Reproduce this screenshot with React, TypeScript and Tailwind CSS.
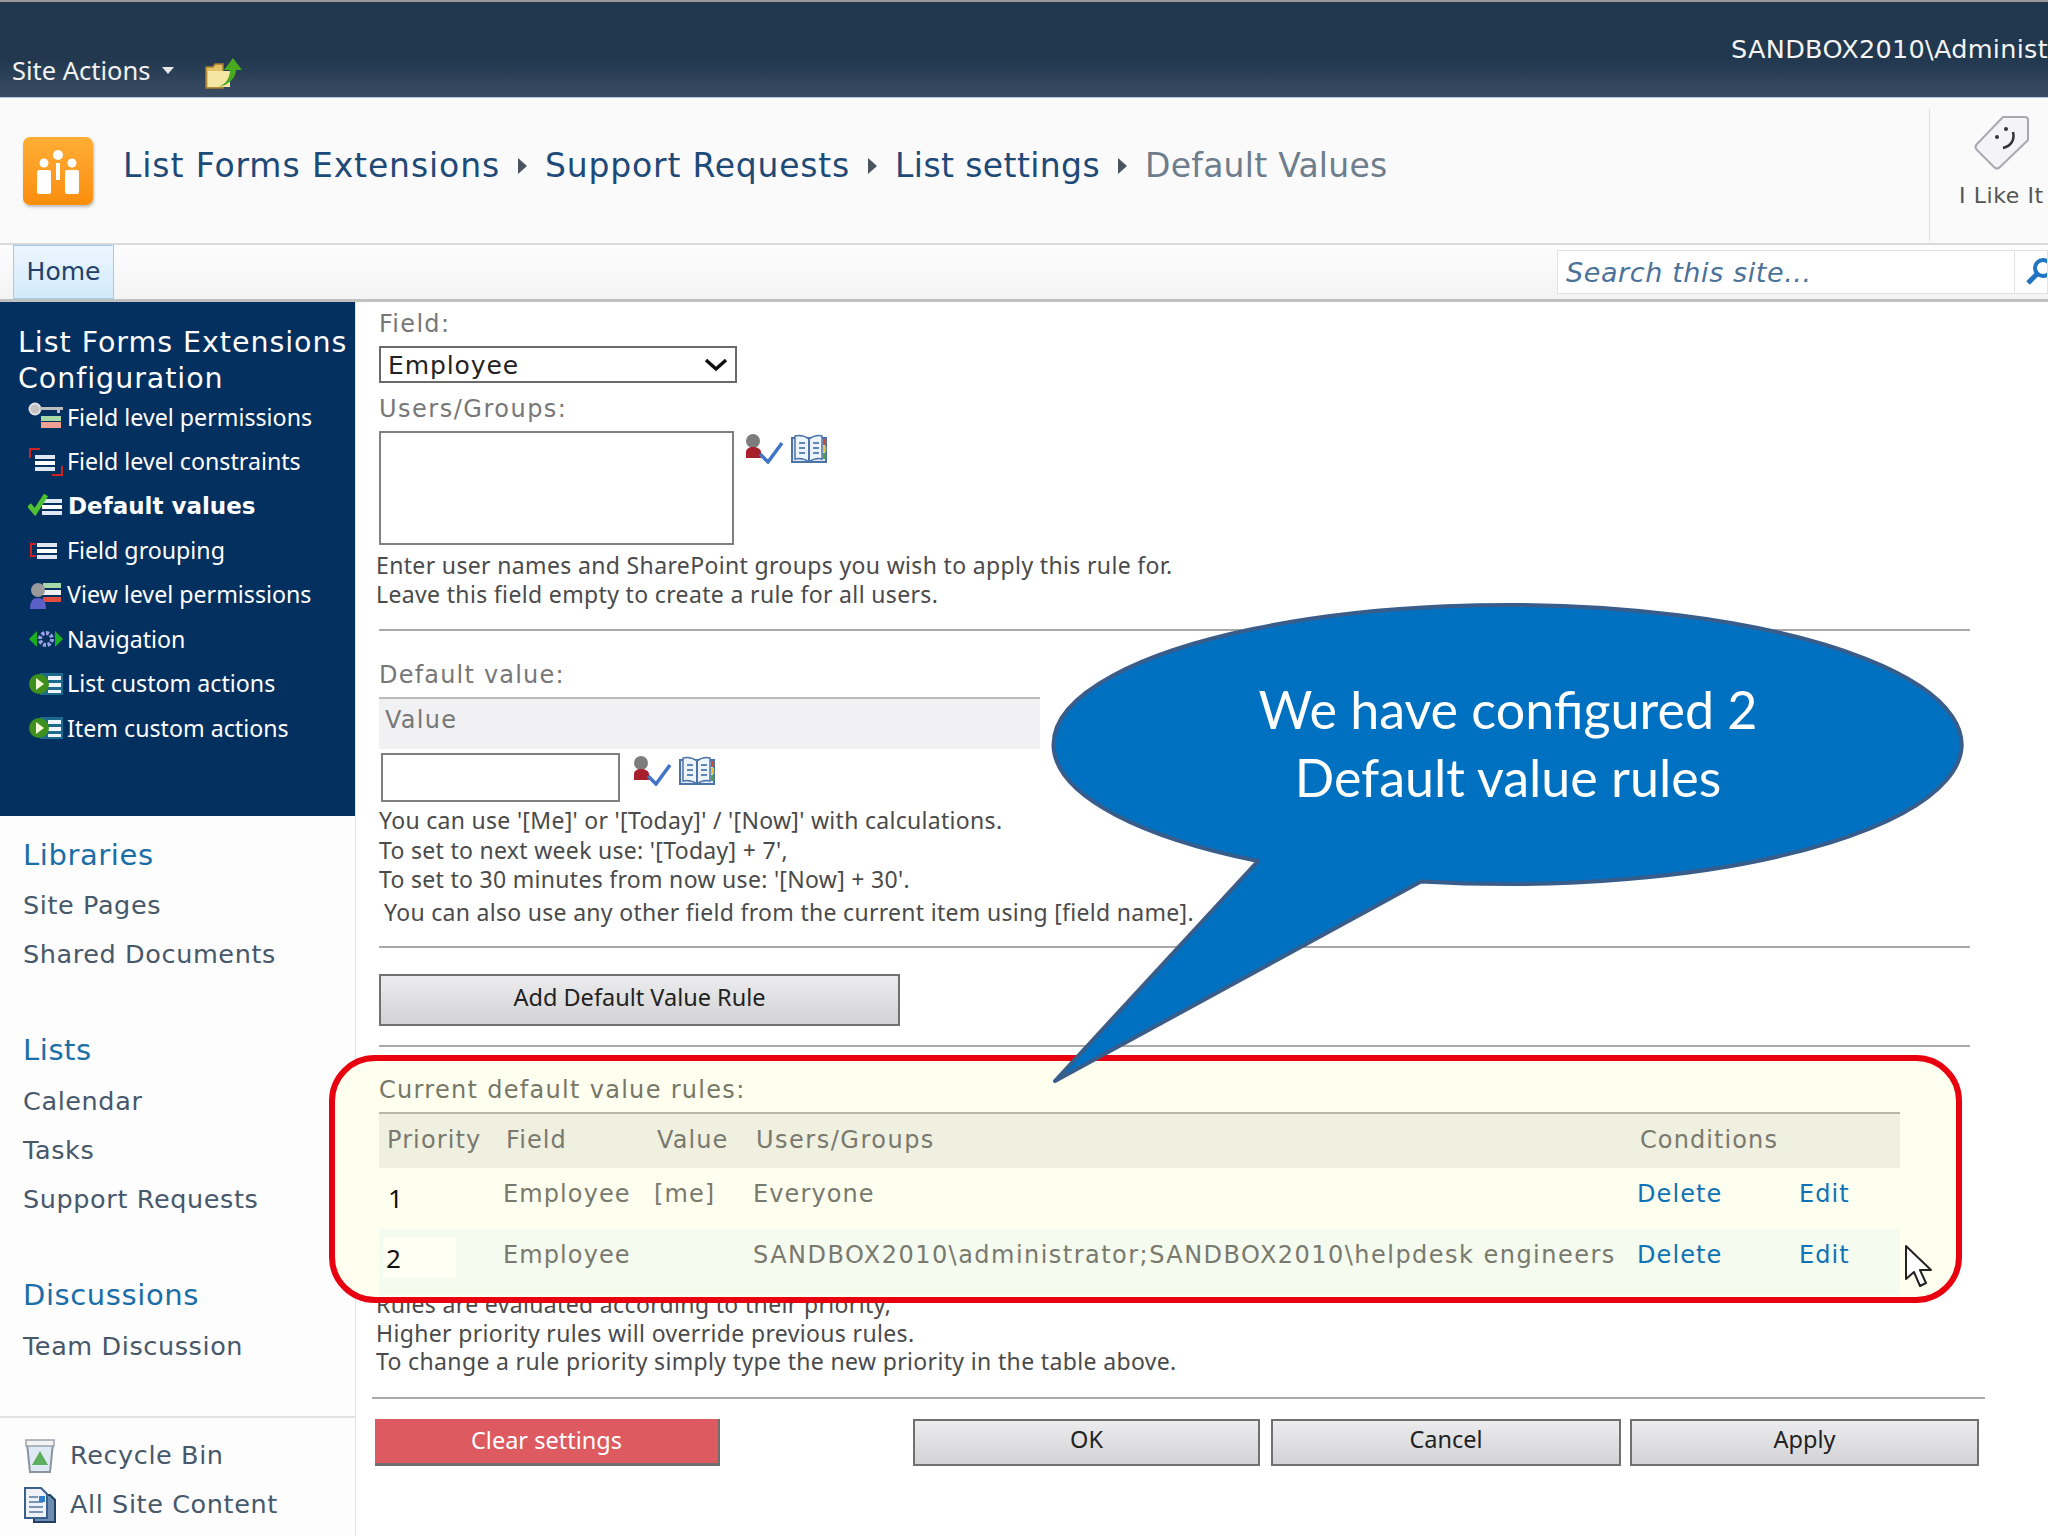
const verdana = "font-['DejaVu_Sans',sans-serif]";
const tahoma = "font-['Noto_Sans',sans-serif]";

const configItems = [
  { label: "Field level permissions", icon: "key" },
  { label: "Field level constraints", icon: "constraints" },
  { label: "Default values", icon: "check", active: true },
  { label: "Field grouping", icon: "group" },
  { label: "View level permissions", icon: "user" },
  { label: "Navigation", icon: "nav" },
  { label: "List custom actions", icon: "action" },
  { label: "Item custom actions", icon: "action" },
];

const quickLaunch = [
  { title: "Libraries", items: ["Site Pages", "Shared Documents"] },
  { title: "Lists", items: ["Calendar", "Tasks", "Support Requests"] },
  { title: "Discussions", items: ["Team Discussion"] },
];

const tableCols = "grid grid-cols-[119px_151px_99px_884px_162px_101px]";

function Bars({ x = 12, colors = ["#dfe8f2", "#ffffff", "#dfe8f2"] }: { x?: number; colors?: string[] }) {
  return (
    <>
      <rect x={x} y="9" width="20" height="4" fill={colors[0]} />
      <rect x={x} y="15" width="20" height="4" fill={colors[1]} />
      <rect x={x} y="21" width="20" height="4" fill={colors[2]} />
    </>
  );
}

function ConfigIcon({ name }: { name: string }) {
  return (
    <svg viewBox="0 0 36 32" className="w-[36px] h-[32px] shrink-0">
      {name === "key" && (
        <>
          <circle cx="7" cy="8" r="5.5" fill="#c4c4c4" stroke="#e2e2e2" strokeWidth="2" />
          <path d="M12 6h23v3h-3v3h-3V9H12z" fill="#bdbdbd" />
          <rect x="13" y="15" width="20" height="5" fill="#a8d8a8" />
          <rect x="13" y="21" width="20" height="6" fill="#f0a090" />
        </>
      )}
      {name === "constraints" && (
        <>
          <path d="M2 12V3h10M34 20v9H24" fill="none" stroke="#d02020" strokeWidth="2" />
          <Bars x={7} />
        </>
      )}
      {name === "check" && (
        <>
          <Bars x={14} />
          <path d="M1 15l6 7L18 5" fill="none" stroke="#4fc030" strokeWidth="5" />
        </>
      )}
      {name === "group" && (
        <>
          <path d="M8 10H3v12h5" fill="none" stroke="#d02020" strokeWidth="2" />
          <Bars x={9} />
        </>
      )}
      {name === "user" && (
        <>
          <rect x="15" y="4" width="18" height="5" fill="#a8d8a8" />
          <rect x="15" y="11" width="18" height="5" fill="#f0f0f0" />
          <rect x="15" y="18" width="18" height="5" fill="#e05040" />
          <circle cx="10" cy="11" r="7" fill="#9a9a9a" />
          <path d="M2 30c0-8 3-11 8-11s8 3 8 11z" fill="#5a60c8" />
        </>
      )}
      {name === "nav" && (
        <>
          <path d="M9 8v16L1 16zM27 8v16l8-8z" fill="#18b020" />
          <circle cx="18" cy="16" r="6" fill="none" stroke="#9aa0e0" strokeWidth="4" strokeDasharray="3 1.6" />
        </>
      )}
      {name === "action" && (
        <>
          <rect x="12" y="5" width="23" height="22" fill="#1d6a8e" />
          <rect x="20" y="8" width="13" height="4" fill="#eef4f8" />
          <rect x="16" y="15" width="17" height="4" fill="#eef4f8" />
          <rect x="20" y="22" width="13" height="3" fill="#eef4f8" />
          <circle cx="11" cy="16" r="10" fill="#3f8f1c" />
          <path d="M8 10l8 6-8 6z" fill="#f2f8d8" />
        </>
      )}
    </svg>
  );
}

function PeoplePicker() {
  return (
    <div className="flex items-start gap-[7px] mt-[3px]">
      <svg viewBox="0 0 40 30" className="w-[40px] h-[30px]">
        <ellipse cx="9" cy="7" rx="7" ry="7" fill="#7d7d7d" />
        <path d="M2 24v-6c0-3 3-5 7-5s8 2 8 5v6z" fill="#a81f2c" />
        <path d="M16 20l8 8L38 9" fill="none" stroke="#3f74c8" strokeWidth="3.5" />
      </svg>
      <svg viewBox="0 0 36 30" className="w-[36px] h-[30px]">
        <path d="M1 4h34v24H1z" fill="#dbe7f5" stroke="#4c74a8" strokeWidth="2" />
        <path d="M4 25V2c5-1 10 0 14 3 4-3 9-4 13-3v23c-4-1-9 0-13 3-4-3-9-4-14-3z" fill="#edf3fa" stroke="#4c74a8" strokeWidth="1.5" />
        <path d="M18 5v22" stroke="#4c74a8" strokeWidth="2" />
        <path d="M8 9h6M8 14h6M8 19h6M22 9h6M22 14h6M22 19h6" stroke="#5f86b8" strokeWidth="2" />
        <rect x="32" y="5" width="3" height="6" fill="#d04a3a" />
        <rect x="32" y="12" width="3" height="6" fill="#e8c030" />
        <rect x="32" y="19" width="3" height="6" fill="#50a040" />
      </svg>
    </div>
  );
}

function Rule({ className = "" }: { className?: string }) {
  return <div className={`h-[2px] bg-[#a9a9a9] ${className}`} />;
}

function GreyButton({ label, className = "" }: { label: string; className?: string }) {
  return (
    <button className={`flex items-center justify-center shrink-0 pb-[4px] border-2 border-[#707070] bg-gradient-to-b from-[#ececee] to-[#d3d3d6] text-[#222] ${tahoma} text-[23.5px] ${className}`}>
      {label}
    </button>
  );
}

export default function App() {
  return (
    <div className="relative w-[2048px] h-[1536px] overflow-hidden bg-white">
      {/* top bar */}
      <div className="relative flex items-end h-[98px] border-t-2 border-[#9a9a9a] border-b border-b-[#b8c6d6] bg-gradient-to-b from-[#21384f] via-[#21384f] via-60% to-[#3a4c64] overflow-hidden">
        <div className={`flex items-center h-[54px] pl-[12px] text-[#f2f2f2] text-[25.5px] ${tahoma}`}>
          <span className="w-[150px]">Site Actions</span>
          <svg viewBox="0 0 12 7" className="w-[12px] h-[7px]"><path d="M0 0h12L6 7z" fill="#e8e8e8" /></svg>
          <svg viewBox="0 0 38 32" className="ml-[31px] mt-[5px] w-[38px] h-[32px]">
            <path d="M1 10h7l2-3h8v24H1z" fill="#e2c068" stroke="#a87c2a" strokeWidth="1.5" />
            <path d="M3 14h22v16H3z" fill="#f6e6a4" />
            <path d="M13 30c8-3 12-9 12-17h-6L28 1l9 12h-6c0 8-7 15-18 17z" fill="#48a81e" />
          </svg>
        </div>
        <div className={`absolute right-0 top-[28px] text-[25.5px] tracking-[0.3px] whitespace-nowrap text-[#f4f4f4] ${verdana}`}>SANDBOX2010\Administ</div>
      </div>

      {/* title row */}
      <div className="flex items-center h-[145px] bg-[#fafafb] overflow-hidden">
        <div className="flex items-center justify-center ml-[23px] w-[70px] h-[68px] rounded-[7px] bg-gradient-to-b from-[#ffae35] to-[#fb8d08] shadow-[1px_2px_3px_#bbb]">
          <svg viewBox="0 0 44 46" className="w-[44px] h-[46px]">
            <circle cx="22" cy="7" r="5" fill="#fff" />
            <circle cx="8" cy="15" r="4.5" fill="#fff" />
            <circle cx="36" cy="15" r="4.5" fill="#fff" />
            <rect x="1" y="22" width="14" height="24" rx="2" fill="#fff" />
            <rect x="29" y="22" width="14" height="24" rx="2" fill="#fff" />
            <path d="M20 15h4v17h-4z" fill="#fff" />
          </svg>
        </div>
        <div className={`flex items-center ml-[30px] mt-[-10px] text-[33px] text-[#1e4a78] whitespace-nowrap ${verdana}`}>
          <span className="tracking-[0.9px]">List Forms Extensions</span>
          <svg viewBox="0 0 9 16" className="mx-[18px] w-[9px] h-[16px]"><path d="M0 0l9 8-9 8z" fill="#4a5560" /></svg>
          <span className="tracking-[0.8px]">Support Requests</span>
          <svg viewBox="0 0 9 16" className="mx-[18px] w-[9px] h-[16px]"><path d="M0 0l9 8-9 8z" fill="#4a5560" /></svg>
          <span className="tracking-[0.4px]">List settings</span>
          <svg viewBox="0 0 9 16" className="mx-[18px] w-[9px] h-[16px]"><path d="M0 0l9 8-9 8z" fill="#4a5560" /></svg>
          <span className="tracking-[0.25px] text-[#6d7d8c]">Default Values</span>
        </div>
        <div className="ml-auto flex flex-col items-start self-end w-[119px] h-[132px] border-l border-[#dedede] pl-[29px] mb-[2px]">
          <svg viewBox="0 0 56 56" className="mt-[5px] ml-[14px] w-[56px] h-[56px]">
            <path d="M30 3h22c2 0 3 1 3 3v20L27 53c-2 2-4 2-6 0L4 36c-2-2-2-4 0-6z" fill="#f4f4f6" stroke="#a8a8b0" strokeWidth="2" />
            <circle cx="24" cy="23" r="2" fill="#333" />
            <circle cx="33" cy="15" r="2" fill="#333" />
            <path d="M40 18c2 8-2 14-10 16" fill="none" stroke="#333" strokeWidth="2.5" />
          </svg>
          <span className={`mt-[9px] whitespace-nowrap text-[22px] tracking-[0.6px] text-[#555] ${verdana}`}>I Like It</span>
        </div>
      </div>

      {/* nav row */}
      <div className="flex items-stretch h-[59px] border-t-2 border-[#d9d9d9] border-b-[3px] border-b-[#c0c0c0] bg-gradient-to-b from-[#fdfdfd] to-[#f3f3f3]">
        <div className={`ml-[13px] w-[101px] flex items-center justify-center border border-[#9fcdec] bg-gradient-to-b from-[#ecf6fe] to-[#d2eafb] text-[25px] text-[#24406a] ${verdana}`}>Home</div>
        <div className="ml-auto flex items-center h-[44px] mt-[5px] w-[491px] border border-[#e2e2e2] bg-white overflow-hidden">
          <input
            readOnly
            placeholder="Search this site..."
            className={`w-[457px] h-full shrink-0 pl-[8px] border-r border-[#e2e2e2] text-[27px] tracking-[0.6px] italic placeholder:text-[#4b7299] ${verdana}`}
          />
          <svg viewBox="0 0 28 28" className="ml-[11px] w-[28px] h-[28px] shrink-0">
            <circle cx="17" cy="10" r="8" fill="none" stroke="#1f74c4" strokeWidth="4" />
            <path d="M11 16L2 25" stroke="#1f74c4" strokeWidth="5" />
          </svg>
        </div>
      </div>

      <div className="flex h-[1236px]">
        {/* sidebar */}
        <div className="flex flex-col w-[356px] shrink-0 border-r border-[#e3e3e3] bg-[#fdfdfd]">
          <div className="h-[514px] bg-[#03305f] pt-[23px] pl-[18px] text-white">
            <div className={`text-[28.5px] leading-[36px] tracking-[0.95px] whitespace-nowrap ${verdana}`}>List Forms Extensions<br />Configuration</div>
            <div className="mt-[-2px] pl-[10px]">
              {configItems.map((item) => (
                <div key={item.label} className={`flex items-center h-[44.4px] gap-[3px] whitespace-nowrap ${item.active ? `font-bold ${verdana} text-[23px]` : `${tahoma} text-[23.2px]`}`}>
                  <ConfigIcon name={item.icon} />
                  <span className={item.active ? "ml-[1px]" : ""}>{item.label}</span>
                </div>
              ))}
            </div>
          </div>
          <div className={`pl-[23px] tracking-[0.6px] ${verdana}`}>
            {quickLaunch.map((group, i) => (
              <div key={group.title} className={i === 0 ? "mt-[20px]" : "mt-[52px]"}>
                <div className="flex items-center h-[40px] text-[29px] text-[#1a6ea8]">{group.title}</div>
                <div className={i === 0 ? "pt-[5px]" : "pt-[6px]"}>
                  {group.items.map((name) => (
                    <div key={name} className="flex items-center h-[49px] text-[25.5px] text-[#47586a]">{name}</div>
                  ))}
                </div>
              </div>
            ))}
          </div>
          <div className={`mt-[45px] border-t-2 border-[#e2e2e2] pt-[13px] pl-[24px] text-[25.5px] tracking-[0.6px] text-[#47586a] ${verdana}`}>
            <div className="flex items-center h-[49px] gap-[14px]">
              <svg viewBox="0 0 32 36" className="w-[32px] h-[36px]">
                <path d="M3 5h26l-3 29H6z" fill="#dfe9f3" stroke="#8a949e" strokeWidth="2" />
                <path d="M2 2h28v6H2z" fill="#f4f4f4" stroke="#9aa3ac" strokeWidth="1.5" />
                <path d="M16 13l8 14H8z" fill="#5cad5c" />
              </svg>
              <span>Recycle Bin</span>
            </div>
            <div className="flex items-center h-[49px] gap-[14px]">
              <svg viewBox="0 0 32 36" className="w-[32px] h-[36px]">
                <path d="M10 8h16l5 5v22H10z" fill="#6c8cb0" stroke="#1f3f66" strokeWidth="2" />
                <path d="M1 1h16l6 6v24H1z" fill="#eef2f8" stroke="#3a5f8a" strokeWidth="2" />
                <path d="M5 10h9M5 15h14M5 20h14M5 25h14" stroke="#7a94b4" strokeWidth="2" />
                <rect x="15" y="9" width="6" height="6" fill="#2f7fd0" />
              </svg>
              <span>All Site Content</span>
            </div>
          </div>
        </div>

        {/* main form */}
        <div className="flex-1 pl-[23px]">
          <div className="w-[1591px]">
            <div className={`mt-[8px] flex items-center h-[28px] text-[24px] tracking-[1.3px] text-[#777] ${verdana}`}>Field:</div>
            <div className={`mt-[8px] flex items-center justify-between w-[358px] h-[37px] border-2 border-[#6a6a6a] pl-[7px] pr-[7px] pt-[2px] text-[25px] tracking-[0.9px] text-[#222] ${verdana}`}>
              <span>Employee</span>
              <svg viewBox="0 0 24 14" className="mb-[2px] w-[24px] h-[14px]"><path d="M2 2l10 9 10-9" fill="none" stroke="#111" strokeWidth="3.5" /></svg>
            </div>
            <div className={`mt-[12px] flex items-center h-[28px] text-[24px] tracking-[1.5px] text-[#777] ${verdana}`}>Users/Groups:</div>
            <div className="mt-[8px] flex items-start gap-[10px]">
              <textarea readOnly className="block w-[355px] h-[114px] border-2 border-[#808080] bg-white resize-none" />
              <PeoplePicker />
            </div>
            <div className={`mt-[6px] ml-[-3px] text-[23px] tracking-[0.35px] leading-[28.5px] text-[#4a4a4a] ${tahoma}`}>
              <p>Enter user names and SharePoint groups you wish to apply this rule for.</p>
              <p>Leave this field empty to create a rule for all users.</p>
            </div>
            <Rule className="mt-[21px]" />
            <div className={`mt-[30px] flex items-center h-[28px] text-[24px] tracking-[1.2px] text-[#777] ${verdana}`}>Default value:</div>
            <div className={`mt-[8px] flex items-center w-[661px] h-[52px] border-t-2 border-[#bbb] bg-[#f1f1f3] pl-[6px] pb-[8px] text-[24px] tracking-[1.3px] text-[#777] ${verdana}`}>Value</div>
            <div className="mt-[4px] ml-[2px] flex items-start gap-[12px]">
              <input readOnly className="block w-[239px] h-[49px] border-2 border-[#808080] bg-white" />
              <PeoplePicker />
            </div>
            <div className={`mt-[4px] text-[23px] tracking-[0.3px] leading-[29.5px] text-[#4a4a4a] ${tahoma}`}>
              <p>You can use '[Me]' or '[Today]' / '[Now]' with calculations.</p>
              <p>To set to next week use: '[Today] + 7',</p>
              <p>To set to 30 minutes from now use: '[Now] + 30'.</p>
              <p className="mt-[3px] ml-[5px]">You can also use any other field from the current item using [field name].</p>
            </div>
            <Rule className="mt-[19px]" />
            <GreyButton label="Add Default Value Rule" className="mt-[26px] w-[521px] h-[52px]" />
            <Rule className="mt-[19px]" />

            <div className="relative z-10 mt-[8px] ml-[-50px] w-[1633px] h-[248px] border-[6px] border-[#e8000f] rounded-[46px] bg-[#ffffef] pl-[44px] pt-[15px]">
              <div className={`flex items-center h-[28px] text-[24px] tracking-[1.3px] text-[#777768] ${verdana}`}>Current default value rules:</div>
              <div className={`mt-[8px] w-[1521px] text-[24px] tracking-[1.1px] text-[#79796e] ${verdana}`}>
                <div className={`${tableCols} items-center h-[56px] border-t-2 border-[#b8b8a8] bg-[#f0f0e1] pl-[8px] pb-[2px]`}>
                  <span>Priority</span>
                  <span>Field</span>
                  <span>Value</span>
                  <span className="col-span-2 tracking-[1.5px]">Users/Groups</span>
                  <span className="ml-[-162px]">Conditions</span>
                </div>
                <div className={`${tableCols} items-start h-[61px] pl-[5px] pt-[8px]`}>
                  <span className={`pl-[4px] mt-[3px] text-[26px] text-[#111] ${tahoma}`}>1</span>
                  <span>Employee</span>
                  <span>[me]</span>
                  <span>Everyone</span>
                  <span className="text-[#0f72b5]">Delete</span>
                  <span className="text-[#0f72b5]">Edit</span>
                </div>
                <div className={`${tableCols} items-start h-[66px] bg-[#f5fbee] pl-[5px] pt-[8px]`}>
                  <span className={`flex items-center w-[73px] h-[40px] ml-[-1px] pl-[3px] mt-[1px] bg-[#fffff4] text-[26px] text-[#111] ${tahoma}`}>2</span>
                  <span>Employee</span>
                  <span />
                  <span className="whitespace-nowrap tracking-[1.47px]">SANDBOX2010\administrator;SANDBOX2010\helpdesk engineers</span>
                  <span className="text-[#0f72b5]">Delete</span>
                  <span className="text-[#0f72b5]">Edit</span>
                </div>
              </div>
              <svg viewBox="0 0 30 45" className="absolute left-[1569px] top-[183px] w-[30px] h-[45px]">
                <path d="M2 2v33l8-7 6 14 6-3-6-13h11z" fill="#fff" stroke="#222" strokeWidth="2" strokeLinejoin="round" />
              </svg>
            </div>

            <div className={`mt-[-13px] ml-[-3px] text-[23px] tracking-[0.35px] leading-[28.5px] text-[#4a4a4a] ${tahoma}`}>
              <p>Rules are evaluated according to their priority,</p>
              <p>Higher priority rules will override previous rules.</p>
              <p>To change a rule priority simply type the new priority in the table above.</p>
            </div>
            <Rule className="mt-[21px] ml-[-7px] w-[1613px]" />
            <div className="mt-[20px] ml-[-4px] flex items-stretch w-[1620px] h-[47px]">
              <button className={`w-[345px] shrink-0 bg-[#dd5a60] border-r-2 border-b-[3px] border-[#6f6f6f] text-white text-[23.5px] ${tahoma}`}>Clear settings</button>
              <GreyButton label="OK" className="ml-[193px] w-[347px]" />
              <GreyButton label="Cancel" className="ml-[11px] w-[350px]" />
              <GreyButton label="Apply" className="ml-[9px] w-[349px]" />
            </div>
          </div>
        </div>
      </div>

      {/* callout */}
      <div className="absolute left-[1054px] top-[605px] w-[908px] h-[476px] z-20">
        <svg viewBox="0 0 908 476" className="absolute inset-0 w-full h-full overflow-visible">
          <path d="M204 256A454 139.5 0 1 1 367 276.4L1 476Z" fill="#0070c0" stroke="#385d8a" strokeWidth="4" strokeLinejoin="round" />
        </svg>
        <div className="relative pt-[70px] text-center text-white text-[52px] leading-[68px] font-['Lato',sans-serif]">
          We have configured 2<br />Default value rules
        </div>
      </div>
    </div>
  );
}
